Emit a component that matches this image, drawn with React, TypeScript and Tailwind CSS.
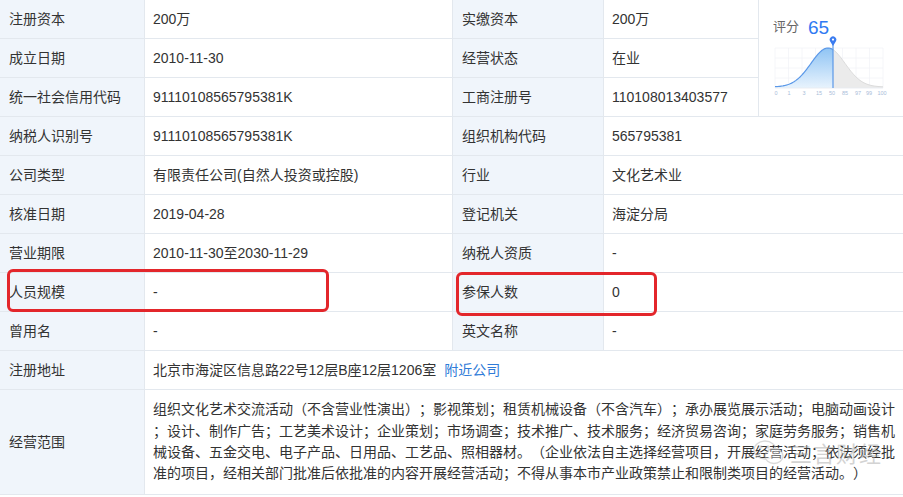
import React from 'react';

const FONT = { fontFamily: '"Liberation Sans", "Noto Sans CJK SC", sans-serif' };

const label = 'bg-[#f0f5fb] flex items-center px-[9px] h-[38px] text-[14px] text-[#333]';
const value = 'bg-white flex items-center px-2 h-[38px] text-[14px] text-[#333] whitespace-nowrap';

const rows: [string, string, string, string][] = [
  ['公司类型', '有限责任公司(自然人投资或控股)', '行业', '文化艺术业'],
  ['核准日期', '2019-04-28', '登记机关', '海淀分局'],
  ['营业期限', '2010-11-30至2030-11-29', '纳税人资质', '-'],
  ['人员规模', '-', '参保人数', '0'],
  ['曾用名', '-', '英文名称', '-'],
];

const scope = [
  '组织文化艺术交流活动（不含营业性演出）；影视策划；租赁机械设备（不含汽车）；承办展览展示活动；电脑动画设计',
  '；设计、制作广告；工艺美术设计；企业策划；市场调查；技术推广、技术服务；经济贸易咨询；家庭劳务服务；销售机',
  '械设备、五金交电、电子产品、日用品、工艺品、照相器材。（企业依法自主选择经营项目，开展经营活动；依法须经批',
  '准的项目，经相关部门批准后依批准的内容开展经营活动；不得从事本市产业政策禁止和限制类项目的经营活动。）',
];

function curve(from: number, to: number) {
  const pts: string[] = [];
  for (let x = from; x <= to; x += 1) {
    const y = 54 - 39 * Math.exp(-Math.pow((x - 60) / 17, 2) / 2) - 1;
    pts.push(`${x},${y.toFixed(2)}`);
  }
  return pts;
}

function ScoreChart() {
  const left = curve(7, 65);
  const right = curve(65, 115);
  const ticks: [string, number][] = [
    ['0', 8], ['1', 21], ['3', 36], ['15', 51], ['50', 64], ['85', 77], ['97', 90], ['99', 101], ['100', 114],
  ];
  return (
    <svg width="130" height="66" viewBox="0 0 130 66">
      <defs>
        <linearGradient id="lf" x1="0" y1="0" x2="0" y2="1">
          <stop offset="0" stopColor="#8fc4f4" />
          <stop offset="1" stopColor="#e8f3fd" />
        </linearGradient>
      </defs>
      {[7, 20.5, 34, 47.5, 61, 74.5, 88, 101.5, 115].map((x) => (
        <line key={x} x1={x} y1="14" x2={x} y2="54" stroke="#f2f4f7" strokeWidth="0.8" />
      ))}
      {[14, 24, 34, 44].map((y) => (
        <line key={y} x1="7" y1={y} x2="115" y2={y} stroke="#f2f4f7" strokeWidth="0.8" />
      ))}
      <path d={`M7,54 L${left.join(' L')} L65,54 Z`} fill="url(#lf)" />
      <path d={`M65,54 L${right.join(' L')} L115,54 Z`} fill="#ebebeb" />
      <path d={`M${right.join(' L')}`} fill="none" stroke="#dcdcdc" strokeWidth="1" />
      <path d={`M${left.join(' L')}`} fill="none" stroke="#5a98e8" strokeWidth="1.2" />
      <line x1="7" y1="54" x2="115" y2="54" stroke="#e6eaf0" strokeWidth="0.8" />
      <line x1="65" y1="9" x2="65" y2="54" stroke="#5a98e8" strokeWidth="1.2" />
      <path d="M65,12 L62.2,7.4 A3.3,3.3 0 1 1 67.8,7.4 Z" fill="#3b7cf0" />
      <circle cx="65" cy="5.6" r="1.1" fill="#fff" />
      {ticks.map(([t, x]) => (
        <text key={t} x={x} y="61" fontSize="5.5" fill="#a9bdd9" textAnchor="middle" fontFamily="Liberation Sans, sans-serif">
          {t}
        </text>
      ))}
    </svg>
  );
}

export default function App() {
  return (
    <div className="relative w-[903px] h-[497px] bg-white overflow-hidden [text-spacing-trim:space-all]" style={FONT}>
      <div className="grid grid-cols-[144px_307px_150px_154px_144px] gap-px bg-[#e3e8ee] border-b border-[#e3e8ee]">
        <div className={label}>注册资本</div>
        <div className={value}>200万</div>
        <div className={label}>实缴资本</div>
        <div className={value}>200万</div>
        <div className="row-span-3 bg-white flex flex-col pt-[17px] pl-[9px]">
          <div className="flex items-center gap-[9px] pl-[5px] h-[20px]">
            <span className="text-[13px] text-[#666]">评分</span>
            <span className="text-[19px] leading-none text-[#2f7af2]">65</span>
          </div>
          <div className="-mt-[3px]">
            <ScoreChart />
          </div>
        </div>

        <div className={label}>成立日期</div>
        <div className={value}>2010-11-30</div>
        <div className={label}>经营状态</div>
        <div className={value}>在业</div>

        <div className={label}>统一社会信用代码</div>
        <div className={value}>91110108565795381K</div>
        <div className={label}>工商注册号</div>
        <div className={value}>110108013403577</div>

        <div className={label}>纳税人识别号</div>
        <div className={value}>91110108565795381K</div>
        <div className={label}>组织机构代码</div>
        <div className={`${value} col-span-2`}>565795381</div>

        {rows.map(([a, b, c, d]) => (
          <React.Fragment key={a}>
            <div className={label}>{a}</div>
            <div className={value}>{b}</div>
            <div className={label}>{c}</div>
            <div className={`${value} col-span-2`}>{d}</div>
          </React.Fragment>
        ))}

        <div className={label}>注册地址</div>
        <div className={`${value} col-span-4`}>
          北京市海淀区信息路22号12层B座12层1206室
          <span className="ml-2 text-[#2f7bd8]">附近公司</span>
        </div>

        <div className={`${label} h-[104px]`}>经营范围</div>
        <div className="col-span-4 bg-white flex flex-col justify-center px-2 h-[104px] text-[14px] leading-[21.3px] text-[#333]">
          {scope.map((l, i) => (
            <div key={i} className="whitespace-nowrap">
              {l}
            </div>
          ))}
        </div>
      </div>

      {/* red highlight boxes */}
      <div className="absolute left-[7px] top-[269px] w-[322px] h-[43px] border-[3px] border-[#e3262b] rounded-[6px]" />
      <div className="absolute left-[456px] top-[272px] w-[201px] h-[44px] border-[3px] border-[#e3262b] rounded-[6px]" />

      {/* watermark */}
      <div className="absolute left-[752px] top-[436px] flex items-center gap-[4px] opacity-50 pointer-events-none">
        <svg width="34" height="28" viewBox="0 0 34 28" fill="none" stroke="#b5b5b5" strokeWidth="1.3">
          <ellipse cx="13" cy="11" rx="11" ry="9" />
          <ellipse cx="22" cy="17" rx="9" ry="7.5" fill="rgba(255,255,255,0.6)" />
          <circle cx="9" cy="8" r="1" fill="#b5b5b5" />
          <circle cx="16" cy="8" r="1" fill="#b5b5b5" />
        </svg>
        <span className="text-[22px] text-[#a8a8a8] tracking-[1px]" style={{ fontFamily: '"Noto Sans CJK SC", sans-serif' }}>
          三言财经
        </span>
      </div>
    </div>
  );
}
